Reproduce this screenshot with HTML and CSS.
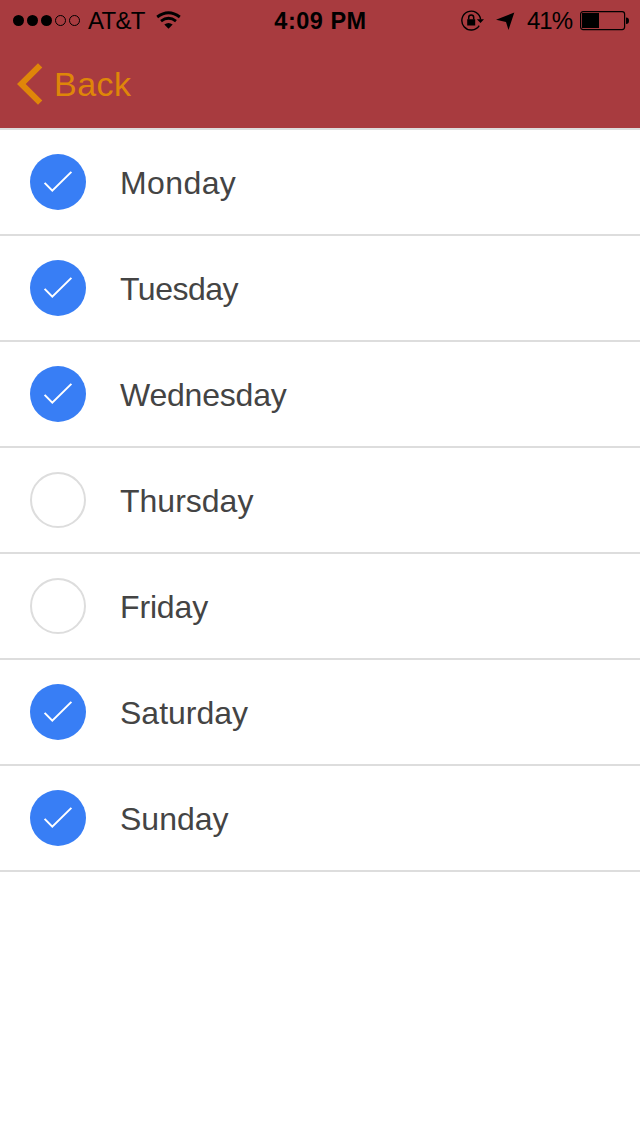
FILE: index.html
```html
<!DOCTYPE html>
<html lang="en">
<head>
<meta charset="utf-8">
<title>Days</title>
<link rel="stylesheet" href="styles.css">
</head>
<body>
<svg class="defs" width="0" height="0" aria-hidden="true">
  <symbol id="check" viewBox="0 0 56 56"><path d="M14.6 28.9 22.3 36.7 41.4 17.9" fill="none" stroke="#fff" stroke-width="2"/></symbol>
</svg>
<header class="header">
  <div class="status">
    <div class="status-left">
      <svg class="signal" width="68" height="12" viewBox="0 0 68 12">
        <circle cx="5.5" cy="5.5" r="5.5"/><circle cx="19.5" cy="5.5" r="5.5"/><circle cx="33.5" cy="5.5" r="5.5"/>
        <g fill="none" stroke="#000"><circle cx="47.5" cy="5.5" r="5"/><circle cx="61.5" cy="5.5" r="5"/></g>
      </svg>
      <span class="carrier">AT&amp;T</span>
      <svg class="wifi" width="25" height="18" viewBox="0 0 25 18">
        <path d="M1.2 6Q12.5-2.6 23.8 6M5 10.1Q12.5 4.5 20 10.1" fill="none" stroke="#000" stroke-width="2.9"/>
        <path d="M8.3 13.4Q12.5 10.4 16.7 13.4L12.5 17.7Z"/>
      </svg>
    </div>
    <span class="time">4:09 PM</span>
    <div class="status-right">
      <svg class="lock" width="24" height="22" viewBox="0 0 24 22">
        <path d="M18.2 15.6A9.4 9.4 0 1 1 19.6 9.5" fill="none" stroke="#000" stroke-width="1.4"/>
        <path d="M15.8 9.2H23L19.5 13ZM6.2 9.2h8v6.3h-8z"/>
        <path d="M7.7 9.5V7.4a2.5 2.5 0 0 1 5 0v2.1" fill="none" stroke="#000" stroke-width="1.5"/>
      </svg>
      <svg class="arrow" width="19" height="19" viewBox="0 0 19 19"><path d="M18.3.5 12.5 18 10 9.9 0 7.8Z"/></svg>
      <span class="percent">41%</span>
      <svg class="battery" width="50" height="20" viewBox="0 0 50 20">
        <rect x=".6" y=".6" width="44" height="18" rx="2.5" fill="none" stroke="#000" stroke-width="1.2"/>
        <path d="M2 2h17v15H2zM46 6.5q3 0 3 3.2t-3 3.3z"/>
      </svg>
    </div>
  </div>
  <nav class="nav">
    <svg class="chevron" width="26" height="43" viewBox="0 0 26 43"><path d="M0 21 21 .2 25.3 4.4 8.7 21 25.3 37.6 21 41.8Z" fill="#df8609"/></svg>
    <span class="back">Back</span>
  </nav>
</header>
<ul class="list">
  <li class="row"><span class="box on"><svg width="56" height="56"><use href="#check"/></svg></span><span class="day monday">Monday</span></li>
  <li class="row"><span class="box on"><svg width="56" height="56"><use href="#check"/></svg></span><span class="day tuesday">Tuesday</span></li>
  <li class="row"><span class="box on"><svg width="56" height="56"><use href="#check"/></svg></span><span class="day wednesday">Wednesday</span></li>
  <li class="row"><span class="box"></span><span class="day">Thursday</span></li>
  <li class="row"><span class="box"></span><span class="day friday">Friday</span></li>
  <li class="row"><span class="box on"><svg width="56" height="56"><use href="#check"/></svg></span><span class="day">Saturday</span></li>
  <li class="row"><span class="box on"><svg width="56" height="56"><use href="#check"/></svg></span><span class="day">Sunday</span></li>
</ul>
</body>
</html>
```
FILE: styles.css
```css
* { box-sizing: border-box; }
body { margin: 0; min-height: 1136px; background: #fff; color: #444; font-family: "Liberation Sans", Arial, sans-serif; }
svg { display: block; flex: none; }
.defs { display: none; }
.header { height: 128px; background: #a83b3f; }
.status { display: grid; grid-template-columns: 1fr auto 1fr; height: 40px; padding: 0 10px 0 12px; align-items: center; color: #000; font-size: 24px; line-height: 38px; white-space: nowrap; }
.status-left, .status-right { display: flex; align-items: center; height: 40px; }
.signal { margin: 2px 0 0 1px; }
.status-right { justify-content: flex-end; }
.carrier { margin-left: 7px; width: 58px; padding-top: 2px; letter-spacing: -0.7px; }
.wifi { margin-left: 10px; }
.time { margin-left: -1px; font-weight: 700; font-size: 23.5px; padding-top: 2px; letter-spacing: 0.5px; }
.lock { margin-top: 1px; }
.arrow { margin-left: 11px; margin-top: 2px; }
.percent { margin-left: 12px; width: 47px; padding-top: 2px; font-size: 24px; letter-spacing: -1px; }
.battery { margin-left: 6px; margin-top: 2px; }
.nav { display: flex; align-items: center; height: 88px; padding-left: 17px; }
.back { margin-left: 11px; font-size: 34px; line-height: 40px; color: #df8609; letter-spacing: 0.5px; }
.list { margin: 0; padding: 0; list-style: none; border-top: 2px solid #ddd; }
.row { display: flex; align-items: center; height: 106px; padding: 0 30px; border-bottom: 2px solid #ddd; }
.box { flex: none; width: 56px; height: 56px; border: 2px solid #ddd; border-radius: 50%; }
.on { border: 0; background: #387ef5; }
.day { margin-left: 34px; font-size: 32px; line-height: 40px; padding-top: 2px; }
.monday { letter-spacing: 0.4px; }
.tuesday { letter-spacing: -0.5px; }
.wednesday { letter-spacing: -0.2px; }
.friday { letter-spacing: -0.15px; }
```
